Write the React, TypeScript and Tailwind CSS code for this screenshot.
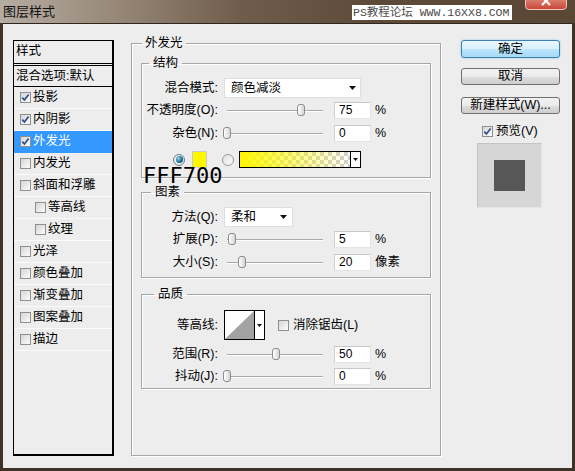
import clsx from "clsx";

const styleItems = [
  { name: "投影", on: true },
  { name: "内阴影", on: true },
  { name: "外发光", on: true, active: true },
  { name: "内发光" },
  { name: "斜面和浮雕" },
  { name: "等高线", sub: true },
  { name: "纹理", sub: true },
  { name: "光泽" },
  { name: "颜色叠加" },
  { name: "渐变叠加" },
  { name: "图案叠加" },
  { name: "描边" },
];

function Check({ on = false }: { on?: boolean }) {
  return (
    <span className="relative flex h-[11px] w-[11px] shrink-0 items-center justify-center border border-[#8e8f8f] bg-[linear-gradient(135deg,#d6d6d6,#fbfbfb)]">
      {on && (
        <svg width="9" height="9" viewBox="0 0 9 9" className="absolute">
          <path d="M1.3 4.6 L3.4 7 L7.6 1.4" fill="none" stroke="#2b4f8c" strokeWidth="1.7" />
        </svg>
      )}
    </span>
  );
}

function Radio({ on = false }: { on?: boolean }) {
  return (
    <span
      className={clsx(
        "flex h-[12px] w-[12px] shrink-0 items-center justify-center rounded-full border",
        on ? "border-[#6a7c88] bg-[#e4eef2]" : "border-[#9a9a9a] bg-[linear-gradient(135deg,#e0e0e0,#fdfdfd)]"
      )}
    >
      {on && <span className="h-[7px] w-[7px] rounded-full bg-[radial-gradient(circle_at_35%_35%,#8fd0ea,#1d6484_60%,#0e3e55)]" />}
    </span>
  );
}

function Caret() {
  return (
    <svg width="7" height="4" viewBox="0 0 7 4">
      <polygon points="0,0 7,0 3.5,4" fill="#111" />
    </svg>
  );
}

function Select({ value, w, pr }: { value: string; w: string; pr: string }) {
  return (
    <div className={clsx("flex h-[20px] items-center justify-between border border-[#dedede] bg-white pl-[6px]", w, pr)}>
      <span>{value}</span>
      <Caret />
    </div>
  );
}

function Slider({ at }: { at: number }) {
  return (
    <div className="relative h-[17px] w-[102px]">
      <div className="absolute left-[3px] right-[3px] top-[8px] h-[2px] border-b border-t border-b-white border-t-[#a9a9a9]" />
      <div
        className="absolute top-[2px] h-[12px] w-[8px] rounded-[3px] border border-[#8c8c8c] bg-[linear-gradient(to_right,#ffffff,#d4d4d4)]"
        style={{ left: at - 4 }}
      />
    </div>
  );
}

function Num({ value }: { value: string }) {
  return (
    <div className="ml-[8px] h-[17px] w-[37px] border border-[#e4e4e4] border-l-[#cfcfcf] border-t-[#c8c8c8] bg-white pl-[4px] text-[12px] leading-[15px]">
      {value}
    </div>
  );
}

function Row({ label, className, children }: { label: string; className?: string; children: React.ReactNode }) {
  return (
    <div className={clsx("flex items-center", className)}>
      <span className="w-[76px] shrink-0 whitespace-nowrap text-right">{label}</span>
      <div className="ml-[6px] flex items-center">{children}</div>
    </div>
  );
}

function ValueRow({ label, at, value, unit = "%", className }: { label: string; at: number; value: string; unit?: string; className?: string }) {
  return (
    <Row label={label} className={clsx("h-[17px]", className)}>
      <Slider at={at} />
      <Num value={value} />
      <span className="ml-[4px]">{unit}</span>
    </Row>
  );
}

const box = "border border-[#a6a6a6] shadow-[inset_1px_1px_0_#fff,1px_1px_0_#fff]";

export default function App() {
  return (
    <div className="relative h-[471px] w-[575px] overflow-hidden bg-[#3f3226] font-['Liberation_Sans','Noto_Sans_CJK_SC',sans-serif] text-[12.5px] text-black">
      <div className="flex h-[23px] items-center bg-[linear-gradient(to_right,#b6ada2_0%,#978878_20%,#705c4a_42%,#5e4a39_65%,#5b4736_100%)] pl-[3px]">
        <span className="text-[13px] text-[#111]">图层样式</span>
      </div>
      <div className="absolute left-[352px] top-[5px] h-[15px] w-[160px] whitespace-nowrap bg-white pl-[1px] font-['Liberation_Mono','Noto_Sans_CJK_SC',monospace] text-[11.5px] leading-[15px] text-[#4a4a4a]">
        PS教程论坛 WWW.16XX8.COM
      </div>
      <div className="absolute left-[525px] top-[-8px] flex h-[18px] w-[42px] items-end justify-center rounded-[4px] border border-[#f3c6bd] bg-[linear-gradient(#e9a393,#c8473a)] pb-[2px]">
        <svg width="10" height="8" viewBox="0 0 10 8">
          <path d="M1 -2 L9 6 M9 -2 L1 6" stroke="#fff" strokeWidth="2" />
        </svg>
      </div>

      <div className="mx-[3px] flex h-[445px] border-t border-[#2f261d] bg-[#ededed] pl-[10px] pt-[16px]">
        <div className="flex h-[416px] w-[101px] flex-col border border-b-2 border-r-2 border-black bg-[#ededed]">
          <div className="h-[25px] border-b-[3px] border-double border-black pl-[2px] leading-[21px]">样式</div>
          <div className="h-[21px] border-b border-black pl-[2px] leading-[20px]">混合选项:默认</div>
          {styleItems.map((s) => (
            <div
              key={s.name}
              className={clsx(
                "flex h-[22px] items-center border-b",
                s.active ? "border-[#3399ff] bg-[#3399ff] text-white" : "border-[#fafafa]",
                s.sub ? "pl-[21px]" : "pl-[6px]"
              )}
            >
              <Check on={s.on} />
              <span className="ml-[2px]">{s.name}</span>
            </div>
          ))}
        </div>

        <fieldset className={clsx("ml-[17px] -mt-[5px] h-[421px] w-[310px] px-[9px] pt-[4px]", box)}>
          <legend className="ml-[1px] px-[3px] leading-[16px]">外发光</legend>

          <fieldset className={clsx("pb-[9px]", box)}>
            <legend className="ml-[7px] px-[4px] leading-[16px]">结构</legend>
            <Row label="混合模式:" className="mt-[7px]">
              <Select value="颜色减淡" w="w-[137px]" pr="pr-[4px]" />
            </Row>
            <ValueRow label="不透明度(O):" at={77} value="75" className="mt-[4px]" />
            <ValueRow label="杂色(N):" at={3} value="0" className="mt-[6px]" />
            <div className="mt-[9px] flex h-[17px] items-center pl-[31px]">
              <Radio on />
              <span className="ml-[7px] h-[17px] w-[15px] border border-[#c9c9c9] bg-[#fff700]" />
              <span className="ml-[15px]">
                <Radio />
              </span>
              <div className="ml-[5px] flex h-[17px] w-[122px] border border-black">
                <svg width="110" height="15" className="shrink-0">
                  <defs>
                    <pattern id="chk" width="8" height="8" patternUnits="userSpaceOnUse">
                      <rect width="8" height="8" fill="#ffffff" />
                      <rect width="4" height="4" fill="#cfcfcf" />
                      <rect x="4" y="4" width="4" height="4" fill="#cfcfcf" />
                    </pattern>
                    <linearGradient id="glow" x1="0" x2="1" y1="0" y2="0">
                      <stop offset="0" stopColor="#fff700" stopOpacity="1" />
                      <stop offset="1" stopColor="#fff700" stopOpacity="0" />
                    </linearGradient>
                  </defs>
                  <rect width="110" height="15" fill="url(#chk)" />
                  <rect width="110" height="15" fill="url(#glow)" />
                </svg>
                <div className="flex flex-1 items-center justify-center border-l border-black bg-white">
                  <svg width="5" height="3" viewBox="0 0 5 3">
                    <polygon points="0,0 5,0 2.5,3" fill="#111" />
                  </svg>
                </div>
              </div>
            </div>
          </fieldset>

          <fieldset className={clsx("mt-[6px] pb-[6px]", box)}>
            <legend className="ml-[9px] px-[4px] leading-[16px]">图素</legend>
            <Row label="方法(Q):" className="mt-[7px]">
              <Select value="柔和" w="w-[69px]" pr="pr-[5px]" />
            </Row>
            <ValueRow label="扩展(P):" at={8} value="5" className="mt-[4px]" />
            <ValueRow label="大小(S):" at={18} value="20" unit="像素" className="mt-[6px]" />
          </fieldset>

          <fieldset className={clsx("mt-[8px] pb-[3px]", box)}>
            <legend className="ml-[12px] px-[4px] leading-[16px]">品质</legend>
            <Row label="等高线:" className="mt-[8px]">
              <div className="flex h-[30px] w-[41px] border border-black bg-white">
                <svg width="29" height="28" viewBox="0 0 29 28" className="shrink-0">
                  <polygon points="0,28 29,0 29,28" fill="#a3a3a3" />
                </svg>
                <div className="flex flex-1 items-center justify-center border-l border-black">
                  <svg width="5" height="3" viewBox="0 0 5 3">
                    <polygon points="0,0 5,0 2.5,3" fill="#111" />
                  </svg>
                </div>
              </div>
              <span className="ml-[13px] flex items-center">
                <Check />
                <span className="ml-[4px]">消除锯齿(L)</span>
              </span>
            </Row>
            <ValueRow label="范围(R):" at={52} value="50" className="mt-[6px]" />
            <ValueRow label="抖动(J):" at={3} value="0" className="mt-[5px]" />
          </fieldset>
        </fieldset>

        <div className="ml-[20px] flex w-[99px] flex-col">
          <div className="h-[18px] rounded-[3px] border border-[#3c7fb1] bg-[linear-gradient(#eaf6fd,#d9f0fc_50%,#bee6fd_50%,#a7d9f5)] text-center leading-[16px] shadow-[0_0_2px_#7fc4ea]">
            确定
          </div>
          <div className="mt-[10px] h-[17px] rounded-[3px] border border-[#707070] bg-[linear-gradient(#f2f2f2,#ebebeb_50%,#dddddd_50%,#cfcfcf)] text-center leading-[15px]">
            取消
          </div>
          <div className="mt-[12px] h-[17px] whitespace-nowrap rounded-[3px] border border-[#707070] bg-[linear-gradient(#f2f2f2,#ebebeb_50%,#dddddd_50%,#cfcfcf)] text-center leading-[15px]">
            新建样式(W)...
          </div>
          <div className="mt-[9px] flex h-[16px] items-center pl-[21px]">
            <Check on />
            <span className="ml-[3px]">预览(V)</span>
          </div>
          <div className="ml-[16px] mt-[4px] flex h-[65px] w-[65px] items-center justify-center border border-[#e6e6e6] border-l-[#c4c4c4] border-t-[#c4c4c4] bg-[#d6d6d6]">
            <div className="h-[31px] w-[31px] bg-[#575757]" />
          </div>
        </div>
      </div>

      <div className="absolute left-[143px] top-[165px] font-['DejaVu_Sans_Mono',monospace] text-[22px] leading-none text-black">
        FFF700
      </div>
    </div>
  );
}
